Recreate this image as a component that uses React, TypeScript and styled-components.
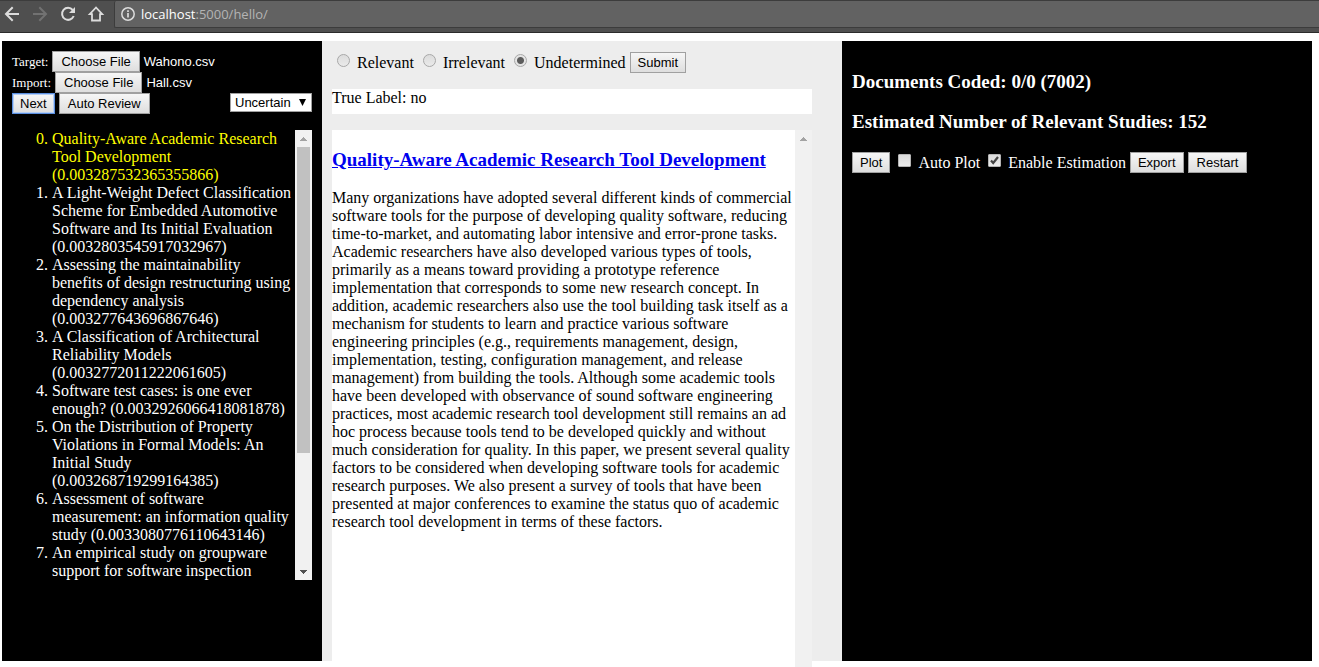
import React, { useRef, useState } from "react";
import styled, { createGlobalStyle, css } from "styled-components";

const SERIF = '"Liberation Serif", "Times New Roman", serif';
const SANS = '"Liberation Sans", Arial, sans-serif';

const GlobalStyle = createGlobalStyle`
  *, *::before, *::after { box-sizing: border-box; }
  body {
    margin: 0;
    height: 100vh;
    overflow: hidden;
    background: #fff;
    color: #000;
    font: 16px/18px ${SERIF};
  }
`;

const Toolbar = styled.header`
  display: flex;
  align-items: flex-start;
  height: 33px;
  padding-left: 5px;
  background: #4f4f4f;
  border-top: 1px solid #3c3c3c;
  border-bottom: 1px solid #2b2b2b;
`;

const NavButtons = styled.nav`
  display: flex;
  gap: 12px;
  padding-top: 5px;
  margin-right: 9px;
`;

const NavButton = styled.button<{ $dim?: boolean }>`
  display: flex;
  width: 16px;
  height: 16px;
  padding: 0;
  border: 0;
  background: none;
  color: ${(p) => (p.$dim ? "#727272" : "#dcdcdc")};
  svg { overflow: visible; }
`;

const AddressBar = styled.div`
  flex: 1;
  display: flex;
  align-items: center;
  gap: 6px;
  height: 27px;
  padding-left: 6px;
  background: #626262;
  border: 1px solid #3c3c3c;
  border-width: 0 0 1px 1px;
  border-radius: 2px 0 0 2px;
  color: #dcdcdc;
`;

const Url = styled.span`
  font: 13px/20px "Open Sans", "Noto Sans", sans-serif;
  color: #b4b4b4;
  b { font-weight: 400; color: #fff; }
`;

const Workspace = styled.main`
  display: flex;
  height: calc(100vh - 47px);
  margin: 8px 7px 0 2px;
`;

const Panel = styled.section<{ $width?: number; $light?: boolean }>`
  flex: ${(p) => (p.$width ? `0 0 ${p.$width}px` : "1")};
  min-width: 0;
  padding: ${(p) => (p.$width && !p.$light ? "10px" : "11px 10px 10px")};
  background: ${(p) => (p.$light ? "#ededed" : "#000")};
  color: ${(p) => (p.$light ? "#000" : "#fff")};
`;

const Row = styled.div`
  display: flex;
  align-items: center;
  gap: 4px;
  height: 21px;
`;

const buttonText = css`
  font: 13px/15px ${SANS};
  color: #000;
`;

const Button = styled.button<{ $focused?: boolean; $wide?: boolean }>`
  ${buttonText}
  height: 21px;
  padding: 2px ${(p) => (p.$wide ? 8 : 7)}px;
  white-space: nowrap;
  background: linear-gradient(#f6f6f6, #dedede);
  border: 1px solid ${(p) => (p.$focused ? "#5b8fe0" : "#a0a0a0")};
  box-shadow: ${(p) => (p.$focused ? "inset 0 0 0 1px #b4cdf3" : "none")};
`;

const FieldLabel = styled.label`
  font-size: 13px;
`;

const HiddenFile = styled.input`
  display: none;
`;

const FileName = styled.span`
  ${buttonText}
  color: #fff;
`;

const OrderSelect = styled.select`
  ${buttonText}
  grid-area: 1 / 1;
  width: 82px;
  height: 19px;
  padding: 0 4px;
  appearance: none;
  background: #fff;
  border: 1px solid #a0a0a0;
  border-radius: 0;
`;

const SelectBox = styled.div`
  display: grid;
  align-items: center;
  align-self: flex-start;
  margin-left: auto;
  svg {
    grid-area: 1 / 1;
    justify-self: end;
    margin-right: 6px;
    pointer-events: none;
  }
`;

const ScrollArea = styled.div<{ $height: string }>`
  display: flex;
  height: ${(p) => p.$height};
  margin-top: 16px;
`;

const ScrollContent = styled.div<{ $white?: boolean }>`
  flex: 1;
  min-width: 0;
  overflow: hidden;
  background: ${(p) => (p.$white ? "#fff" : "none")};
`;

const Track = styled.div`
  display: flex;
  flex-direction: column;
  align-items: center;
  flex: 0 0 17px;
  background: #f1f1f1;
`;

const Thumb = styled.div`
  width: 13px;
  height: 306px;
  background: #c1c1c1;
`;

const ArrowCell = styled.div<{ $end?: boolean }>`
  display: flex;
  align-items: center;
  justify-content: center;
  width: 17px;
  height: 17px;
  margin-top: ${(p) => (p.$end ? "auto" : "0")};
`;

const StudyList = styled.ol`
  margin: 0;
  padding-left: 40px;
`;

const Study = styled.li<{ $current?: boolean }>`
  color: ${(p) => (p.$current ? "#ff0" : "#fff")};
`;

const Choice = styled.label<{ $indent: number }>`
  display: flex;
  align-items: center;
  gap: 7px;
  padding-left: ${(p) => p.$indent}px;
  white-space: nowrap;
`;

const Radio = styled.input`
  width: 13px;
  height: 13px;
  margin: 0 0 4px;
  appearance: none;
  border: 1px solid #a8a8a8;
  border-radius: 50%;
  background: linear-gradient(#dcdcdc, #eaeaea);
  &:checked {
    background: radial-gradient(circle, #5c5c5c 0 3px, #e4e4e4 4px);
  }
`;

const CheckWrap = styled.span`
  display: grid;
  margin-bottom: 4px;
  input, svg { grid-area: 1 / 1; }
  svg { pointer-events: none; }
`;

const Check = styled.input`
  width: 13px;
  height: 13px;
  margin: 0;
  appearance: none;
  border: 1px solid #b4b4b4;
  border-radius: 1px;
  background: linear-gradient(#dadada, #ececec);
`;

const TrueLabel = styled.div`
  height: 25px;
  margin-top: 16px;
  background: #fff;
`;

const ReaderBody = styled.div`
  width: 480px;
`;

const DocTitle = styled.h3`
  margin: 20px 0 19px;
  font-size: 19px;
  line-height: 20px;
  white-space: nowrap;
  a { color: #00e; }
`;

const Abstract = styled.p`
  margin: 0;
`;

const Stat = styled.h3`
  margin: 20px 0;
  font-size: 19px;
  line-height: 20px;
`;

const studies = [
  "Quality-Aware Academic Research Tool Development (0.003287532365355866)",
  "A Light-Weight Defect Classification Scheme for Embedded Automotive Software and Its Initial Evaluation (0.0032803545917032967)",
  "Assessing the maintainability benefits of design restructuring using dependency analysis (0.003277643696867646)",
  "A Classification of Architectural Reliability Models (0.0032772011222061605)",
  "Software test cases: is one ever enough? (0.0032926066418081878)",
  "On the Distribution of Property Violations in Formal Models: An Initial Study (0.003268719299164385)",
  "Assessment of software measurement: an information quality study (0.0033080776110643146)",
  "An empirical study on groupware support for software inspection",
];

const Triangle = ({ up, color }: { up?: boolean; color: string }) => (
  <svg width="7" height="4" viewBox="0 0 7 4" fill={color} shapeRendering="crispEdges" aria-hidden="true">
    <path d={up ? "M3 0h1v1h1v1h1v1h1v1H0V3h1V2h1V1h1z" : "M0 0h7v1H6v1H5v1H4v1H3V3H2V2H1V1H0z"} />
  </svg>
);

function FileRow({ id, label, initial }: { id: string; label: string; initial: string }) {
  const input = useRef<HTMLInputElement>(null);
  const [name, setName] = useState(initial);
  return (
    <Row>
      <FieldLabel htmlFor={id}>{label}</FieldLabel>
      <HiddenFile
        id={id}
        ref={input}
        type="file"
        accept=".csv"
        onChange={(e) => setName(e.target.files?.[0]?.name ?? name)}
      />
      <Button type="button" $wide onClick={() => input.current?.click()}>Choose File</Button>
      <FileName>{name}</FileName>
    </Row>
  );
}

function CheckOption({ label, initial }: { label: string; initial: boolean }) {
  const [on, setOn] = useState(initial);
  return (
    <Choice $indent={4}>
      <CheckWrap>
        <Check type="checkbox" checked={on} onChange={() => setOn(!on)} />
        {on && (
          <svg width="13" height="13" viewBox="0 0 13 13" fill="none" stroke="#444" strokeWidth="2.2" aria-hidden="true">
            <path d="M3 6.5 5.2 9 10 3" />
          </svg>
        )}
      </CheckWrap>
      {label}
    </Choice>
  );
}

export default function App() {
  const [verdict, setVerdict] = useState("Undetermined");
  return (
    <>
      <GlobalStyle />
      <Toolbar>
        <NavButtons>
          <NavButton aria-label="Back">
            <svg width="16" height="16" fill="none" stroke="currentColor" strokeWidth="2">
              <path d="M14 8H1.500M7.700 1.300 1 8l6.700 6.700" />
            </svg>
          </NavButton>
          <NavButton aria-label="Forward" $dim>
            <svg width="16" height="16" fill="none" stroke="currentColor" strokeWidth="2">
              <path d="M0 8h12.500M6.300 1.300 13 8l-6.700 6.700" />
            </svg>
          </NavButton>
          <NavButton aria-label="Reload">
            <svg width="16" height="16" fill="none" stroke="currentColor" strokeWidth="2">
              <path d="M11.700 4A6 6 0 1 0 12.700 10" />
              <path d="M14 1v6H8z" fill="currentColor" stroke="none" />
            </svg>
          </NavButton>
          <NavButton aria-label="Home">
            <svg width="16" height="16" fill="none" stroke="currentColor" strokeWidth="1.800">
              <path d="M7 1.500 .8 8.100H3V14.500h8V8.100h2.200z" />
            </svg>
          </NavButton>
        </NavButtons>
        <AddressBar>
          <svg width="14" height="14" fill="none" stroke="currentColor" aria-hidden="true">
            <circle cx="7" cy="7" r="6.200" strokeWidth="1.500" />
            <path d="M7 6v4.500M7 3.300v1.700" strokeWidth="1.700" />
          </svg>
          <Url><b>localhost</b>:5000/hello/</Url>
        </AddressBar>
      </Toolbar>

      <Workspace>
        <Panel $width={320}>
          <FileRow id="target" label="Target:" initial="Wahono.csv" />
          <FileRow id="import" label="Import:" initial="Hall.csv" />
          <Row>
            <Button $focused>Next</Button>
            <Button $wide>Auto Review</Button>
            <SelectBox>
              <OrderSelect aria-label="Order" defaultValue="Uncertain">
                <option>Uncertain</option>
              </OrderSelect>
              <svg width="7" height="7" aria-hidden="true">
                <path d="M0 0h7L3.500 7z" />
              </svg>
            </SelectBox>
          </Row>
          <ScrollArea $height="450px">
            <ScrollContent>
              <StudyList start={0}>
                {studies.map((s, i) => (
                  <Study key={s} $current={i === 0}>{s}</Study>
                ))}
              </StudyList>
            </ScrollContent>
            <Track>
              <ArrowCell><Triangle up color="#a3a3a3" /></ArrowCell>
              <Thumb />
              <ArrowCell $end><Triangle color="#505050" /></ArrowCell>
            </Track>
          </ScrollArea>
        </Panel>

        <Panel $width={520} $light>
          <ReaderBody>
            <Row>
              {["Relevant", "Irrelevant", "Undetermined"].map((v) => (
                <Choice key={v} $indent={5}>
                  <Radio type="radio" name="verdict" checked={verdict === v} onChange={() => setVerdict(v)} />
                  {v}
                </Choice>
              ))}
              <Button>Submit</Button>
            </Row>
            <TrueLabel>True Label: no</TrueLabel>
            <ScrollArea $height="calc(100vh - 130px)">
              <ScrollContent $white>
                <DocTitle><a href="#paper">Quality-Aware Academic Research Tool Development</a></DocTitle>
                <Abstract>
                  Many organizations have adopted several different kinds of commercial software tools for the
                  purpose of developing quality software, reducing time-to-market, and automating labor intensive
                  and error-prone tasks. Academic researchers have also developed various types of tools,
                  primarily as a means toward providing a prototype reference implementation that corresponds to
                  some new research concept. In addition, academic researchers also use the tool building task
                  itself as a mechanism for students to learn and practice various software engineering
                  principles (e.g., requirements management, design, implementation, testing, configuration
                  management, and release management) from building the tools. Although some academic tools have
                  been developed with observance of sound software engineering practices, most academic research
                  tool development still remains an ad hoc process because tools tend to be developed quickly and
                  without much consideration for quality. In this paper, we present several quality factors to be
                  considered when developing software tools for academic research purposes. We also present a
                  survey of tools that have been presented at major conferences to examine the status quo of
                  academic research tool development in terms of these factors.
                </Abstract>
              </ScrollContent>
              <Track>
                <ArrowCell><Triangle up color="#a3a3a3" /></ArrowCell>
              </Track>
            </ScrollArea>
          </ReaderBody>
        </Panel>

        <Panel>
          <Stat>Documents Coded: 0/0 (7002)</Stat>
          <Stat>Estimated Number of Relevant Studies: 152</Stat>
          <Row>
            <Button>Plot</Button>
            <CheckOption label="Auto Plot" initial={false} />
            <CheckOption label="Enable Estimation" initial />
            <Button>Export</Button>
            <Button $wide>Restart</Button>
          </Row>
        </Panel>
      </Workspace>
    </>
  );
}
